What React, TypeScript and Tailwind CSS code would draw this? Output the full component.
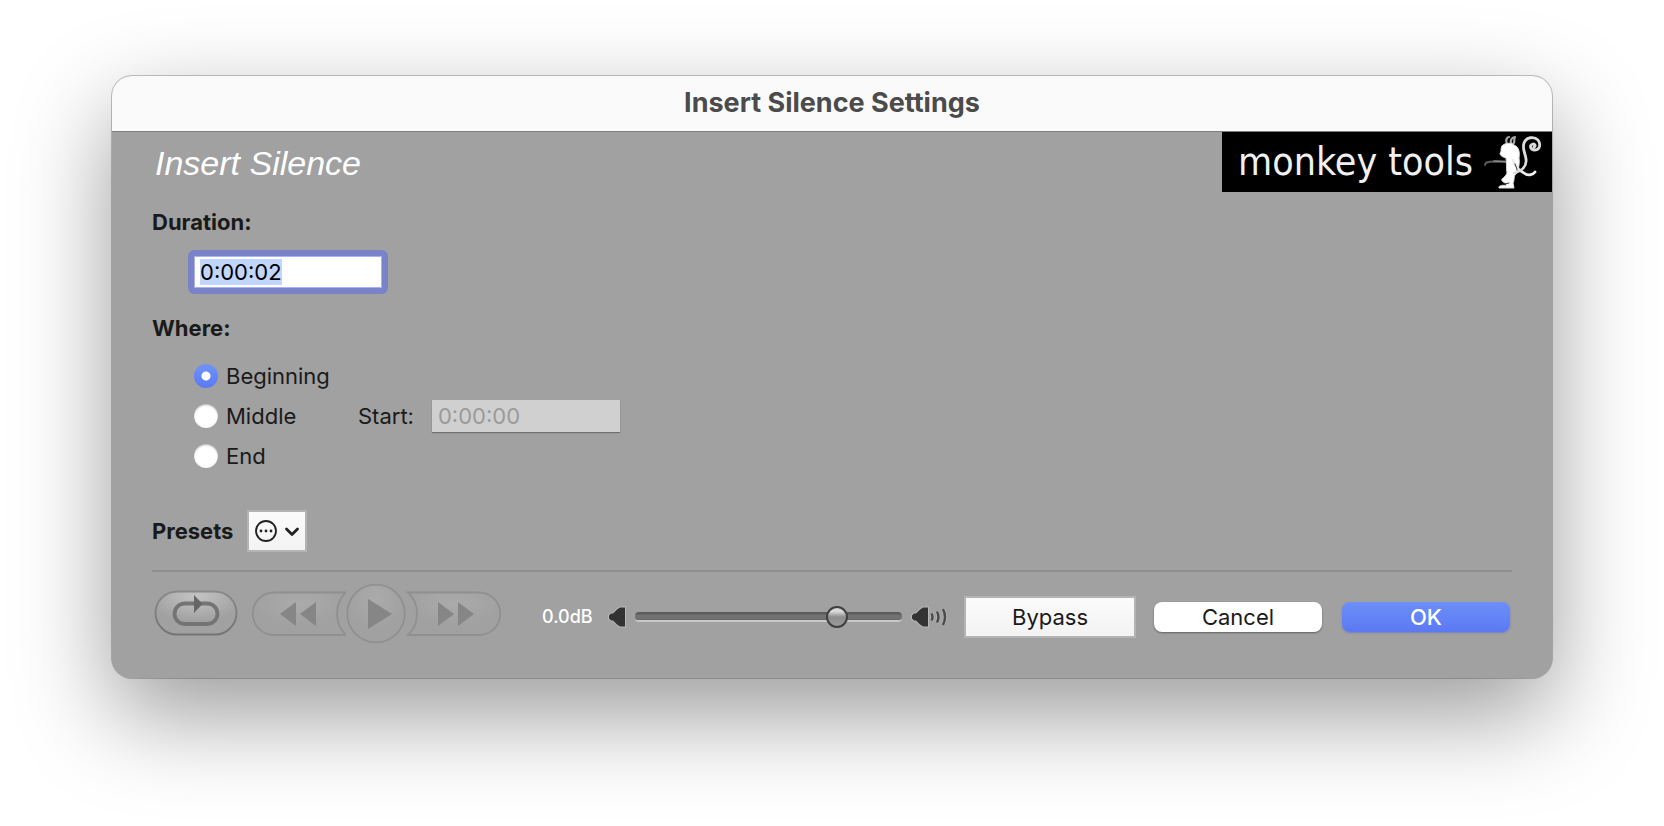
import {useEffect, useRef, useState} from "react";

interface RadioOptionProps {
    label: string
    checked: boolean
    onSelect: () => void
}

const SPEAKER = "M2 10.500 4 8.500H6L10 4.500 13 2.500H18V21.500H13L10 19.500 6 15.500H4L2 13.500Z"

function App() {
    const [duration, setDuration] = useState("0:00:02")
    const [where, setWhere] = useState("Beginning")
    const [gain, setGain] = useState(78)
    const durationRef = useRef<HTMLInputElement>(null)

    useEffect(() => {
        durationRef.current?.focus()
        durationRef.current?.select()
    }, [])

    return (
        <main className="min-h-screen bg-white px-28 pt-19 font-['Inter','Liberation_Sans',sans-serif] text-[22px] leading-7 text-[#1a1a1a]">
            <div className="overflow-hidden rounded-[20px] bg-[#a1a1a1] shadow-[0_0_0_1px_rgba(0,0,0,0.22),0_36px_96px_rgba(0,0,0,0.4)]">
                <header className="flex h-14 items-center justify-center border-b border-[#7e7e7e] bg-[#fafafa] pb-0.5">
                    <h1 className="text-[27px] leading-8 font-bold text-[#4b4b4b]">Insert Silence Settings</h1>
                </header>
                <div className="flex items-start justify-between pl-[43px]">
                    <h2 className="pt-[11px] font-['Liberation_Sans',sans-serif] text-[34px] leading-10 text-white italic">Insert Silence</h2>
                    <Logo/>
                </div>
                <div className="px-10 pb-6.5">
                    <label htmlFor="duration" className="mt-4 block font-bold">Duration:</label>
                    <div className="mt-5 pl-[42px]">
                        <div className="w-47 rounded-xs ring-6 ring-[#7b83c8]">
                            <input
                                id="duration"
                                ref={durationRef}
                                value={duration}
                                onChange={e => setDuration(e.target.value)}
                                className="block h-8 w-full bg-white px-1.5 text-black ring-1 ring-[#a9b2f3] outline-none ring-inset selection:bg-[#c2d5fc] selection:text-black"
                            />
                        </div>
                    </div>
                    <fieldset className="mt-6.5">
                        <legend className="font-bold">Where:</legend>
                        <div className="mt-3.5 flex flex-col pl-[42px]">
                            <RadioOption label="Beginning" checked={where === "Beginning"} onSelect={() => setWhere("Beginning")}/>
                            <div className="flex items-center">
                                <div className="w-41">
                                    <RadioOption label="Middle" checked={where === "Middle"} onSelect={() => setWhere("Middle")}/>
                                </div>
                                <label htmlFor="start">Start:</label>
                                <input
                                    id="start"
                                    disabled={where !== "Middle"}
                                    defaultValue="0:00:00"
                                    className="ml-4.5 h-8 w-47 bg-white px-1.5 text-black shadow-[0_1px_1px_rgba(0,0,0,0.3)] disabled:bg-[#d0d0d0] disabled:text-[#9a9a9a]"
                                />
                            </div>
                            <RadioOption label="End" checked={where === "End"} onSelect={() => setWhere("End")}/>
                        </div>
                    </fieldset>
                    <div className="mt-8.5 flex items-center gap-3.5">
                        <span className="font-bold">Presets</span>
                        <button aria-label="Presets" className="flex h-[42px] w-15 items-center justify-center border-2 border-[#b4b4b4] bg-linear-to-b from-[#fbfbfb] to-[#f3f3f3]">
                            <PresetIcon/>
                        </button>
                    </div>
                    <div className="mt-4.5 h-0.5 bg-[#8f8f8f]"/>
                    <div className="mt-2.5 flex items-center pr-0.5">
                        <Transport/>
                        <label htmlFor="gain" className="ml-9.5 text-[18px] font-medium text-white">0.0dB</label>
                        <svg className="ml-3.5 shrink-0" width="20" height="24" viewBox="0 0 20 24">
                            <path d={SPEAKER} fill="#333" stroke="#b8b8b8" strokeWidth="2" paintOrder="stroke"/>
                        </svg>
                        <input
                            id="gain"
                            type="range"
                            value={gain}
                            onChange={e => setGain(Number(e.target.value))}
                            className="mx-2 h-6 min-w-0 flex-1 appearance-none bg-transparent [&::-webkit-slider-runnable-track]:h-2.5 [&::-webkit-slider-runnable-track]:rounded-sm [&::-webkit-slider-runnable-track]:border-b-2 [&::-webkit-slider-runnable-track]:border-[#c8c8c8] [&::-webkit-slider-runnable-track]:bg-[linear-gradient(#5c5c5c_2px,#727272_3px,#727272_7px,#606060)] [&::-webkit-slider-thumb]:-mt-1.5 [&::-webkit-slider-thumb]:size-[22px] [&::-webkit-slider-thumb]:appearance-none [&::-webkit-slider-thumb]:rounded-full [&::-webkit-slider-thumb]:border-2 [&::-webkit-slider-thumb]:border-[#404040] [&::-webkit-slider-thumb]:bg-[linear-gradient(#d8d8d8_20%,#8d8d8d_50%,#9a9a9a)]"
                        />
                        <SpeakerLoud/>
                        <button className="ml-4 h-[42px] w-43 shrink-0 border-2 border-[#b4b4b4] bg-linear-to-b from-[#fbfbfb] to-[#f3f3f3]">Bypass</button>
                        <button className="ml-4.5 h-[30px] w-42 shrink-0 rounded-lg bg-white shadow-[0_1px_2px_rgba(0,0,0,0.4)]">Cancel</button>
                        <button className="ml-5 h-[30px] w-42 shrink-0 rounded-lg bg-linear-to-b from-[#6c8ff8] to-[#5b79f3] font-medium text-white shadow-[0_1px_2px_rgba(80,100,200,0.5)]">OK</button>
                    </div>
                </div>
            </div>
        </main>
    )
}

function RadioOption({label, checked, onSelect}: RadioOptionProps) {
    return (
        <label className="flex h-10 items-center gap-2">
            <input
                type="radio"
                name="where"
                checked={checked}
                onChange={onSelect}
                className="size-6 appearance-none rounded-full bg-white shadow-[inset_0_1px_2px_rgba(0,0,0,0.3)] checked:bg-[radial-gradient(circle,#fff_4px,transparent_5px),linear-gradient(#6f93f9,#5a79f4)] checked:shadow-none"
            />
            {label}
        </label>
    )
}

function Logo() {
    return (
        <div className="flex h-15 w-[330px] shrink-0 items-center justify-between bg-black pl-4 text-[39px] leading-10 text-[#f0f0f0]">
            <span className="font-['DejaVu_Sans_Condensed','DejaVu_Sans',sans-serif] whitespace-nowrap">monkey tools</span>
            <svg className="shrink-0" width="72" height="60" viewBox="0 0 72 60" fill="none" strokeLinecap="round" strokeLinejoin="round">
                <path d="M5 33C5 30 8 29.500 14 29.500L26 30" stroke="#5a5a5a" strokeWidth="1.800"/>
                <path d="M14 29 26 29.500" stroke="#8a8a8a" strokeWidth="1.500"/>
                <path d="M27 12C25 8 27 5 29 5M31 12C30 8 32 5 35 5C33 8 36 9 33 12" stroke="#aaa" strokeWidth="2.200"/>
                <path d="M22 14C24 11 31 10 34 13C39 15 40 20 39 26C40 32 38 35 39 38L36 42C33 44 35 48 33 51L34 56H19C18 53 23 54 27 53C25 50 21 50 22 47C24 45 26 44 27 41C26 36 27 31 26 26C23 25 20 24 20 21C22 20 20 17 22 14Z" fill="#fff" stroke="#ddd" strokeWidth="1"/>
                <path d="M22 52.500 29 51" stroke="#333" strokeWidth="1"/>
                <path d="M33 28C34 33 38 38 44 41C48 44 53 43 55 40" stroke="#eee" strokeWidth="2.800"/>
                <path d="M34 41C42 39 47 34 46 27C45 20 42 17 44 11C46 5 54 4 58 8C61 12 60 18 55 18C50 18 49 13 53 12C55 12 56 14 54 15" stroke="#ddd" strokeWidth="2.800"/>
                <path d="M35 32C36 35 37 36 37 38" stroke="#222" strokeWidth="1"/>
            </svg>
        </div>
    )
}

function PresetIcon() {
    return (
        <svg width="46" height="26" viewBox="0 0 46 26" fill="none" stroke="#222">
            <circle cx="12" cy="13" r="10" strokeWidth="1.800"/>
            <g fill="#222" stroke="none">
                <circle cx="7" cy="13" r="1.400"/>
                <circle cx="12" cy="13" r="1.400"/>
                <circle cx="17" cy="13" r="1.400"/>
            </g>
            <path d="M32.500 11 38 16.500 43.500 11" strokeWidth="2.800" strokeLinecap="round" strokeLinejoin="round"/>
        </svg>
    )
}

function Transport() {
    return (
        <div className="flex shrink-0 items-center">
            <button aria-label="Loop">
                <svg width="96" height="70" viewBox="0 0 96 70" fill="none">
                    <defs>
                        <radialGradient id="gloss" cx="0.5" cy="0.1" r="0.6">
                            <stop offset="0" stopColor="#c4c4c4"/>
                            <stop offset="1" stopColor="#a1a1a1"/>
                        </radialGradient>
                        <radialGradient id="gloss-soft" cx="0.5" cy="0.25" r="0.5">
                            <stop offset="0" stopColor="#ababab"/>
                            <stop offset="1" stopColor="#a1a1a1"/>
                        </radialGradient>
                        <linearGradient id="rim" x1="0" y1="0" x2="0" y2="1">
                            <stop offset="0" stopColor="#8a8a8a"/>
                            <stop offset="1" stopColor="#747474"/>
                        </linearGradient>
                    </defs>
                    <rect x="3.500" y="9.500" width="81" height="43" rx="21.500" fill="url(#gloss)" stroke="url(#rim)" strokeWidth="2"/>
                    <rect x="22.500" y="21.500" width="43" height="20.500" rx="10.250" stroke="#747474" strokeWidth="3.800"/>
                    <path d="M42 13 50.500 22 42 31Z" fill="#666"/>
                </svg>
            </button>
            <button aria-label="Rewind" disabled>
                <svg width="98" height="70" viewBox="0 0 98 70" fill="none">
                    <path d="M98 10.500H26A21.250 21.250 0 0 0 26 53H98C86 42 86 21 98 10.500Z" fill="url(#gloss-soft)" stroke="#909090" strokeWidth="1.800"/>
                    <path d="M48 20V44L32 32ZM68 20V44L52 32Z" fill="#868686"/>
                </svg>
            </button>
            <button aria-label="Play" disabled>
                <svg width="60" height="70" viewBox="0 0 60 70" fill="none">
                    <circle cx="30" cy="31.500" r="28.800" fill="url(#gloss-soft)" stroke="#909090" strokeWidth="1.800"/>
                    <path d="M22 17V47L46 32Z" fill="#868686"/>
                </svg>
            </button>
            <button aria-label="Fast forward" disabled>
                <svg width="98" height="70" viewBox="0 0 98 70" fill="none">
                    <path d="M2 10.500H73A21.250 21.250 0 0 1 73 53H2C14 42 14 21 2 10.500Z" fill="url(#gloss-soft)" stroke="#909090" strokeWidth="1.800"/>
                    <path d="M32 20V44L48 32ZM52 20V44L68 32Z" fill="#868686"/>
                </svg>
            </button>
        </div>
    )
}

function SpeakerLoud() {
    return (
        <svg className="shrink-0" width="38" height="24" viewBox="0 0 38 24" fill="none">
            <path d={SPEAKER} fill="#333" stroke="#b8b8b8" strokeWidth="2" paintOrder="stroke"/>
            <g stroke="#b8b8b8" strokeWidth="4">
                <path d="M21.500 8.500Q23.500 12 21.500 15.500M27 6.500Q30 12 27 17.500M33 4Q37 12 33 20"/>
            </g>
            <g stroke="#4a4a4a" strokeWidth="2.500">
                <path d="M21.500 8.500Q23.500 12 21.500 15.500M27 6.500Q30 12 27 17.500M33 4Q37 12 33 20"/>
            </g>
        </svg>
    )
}

export default App;
